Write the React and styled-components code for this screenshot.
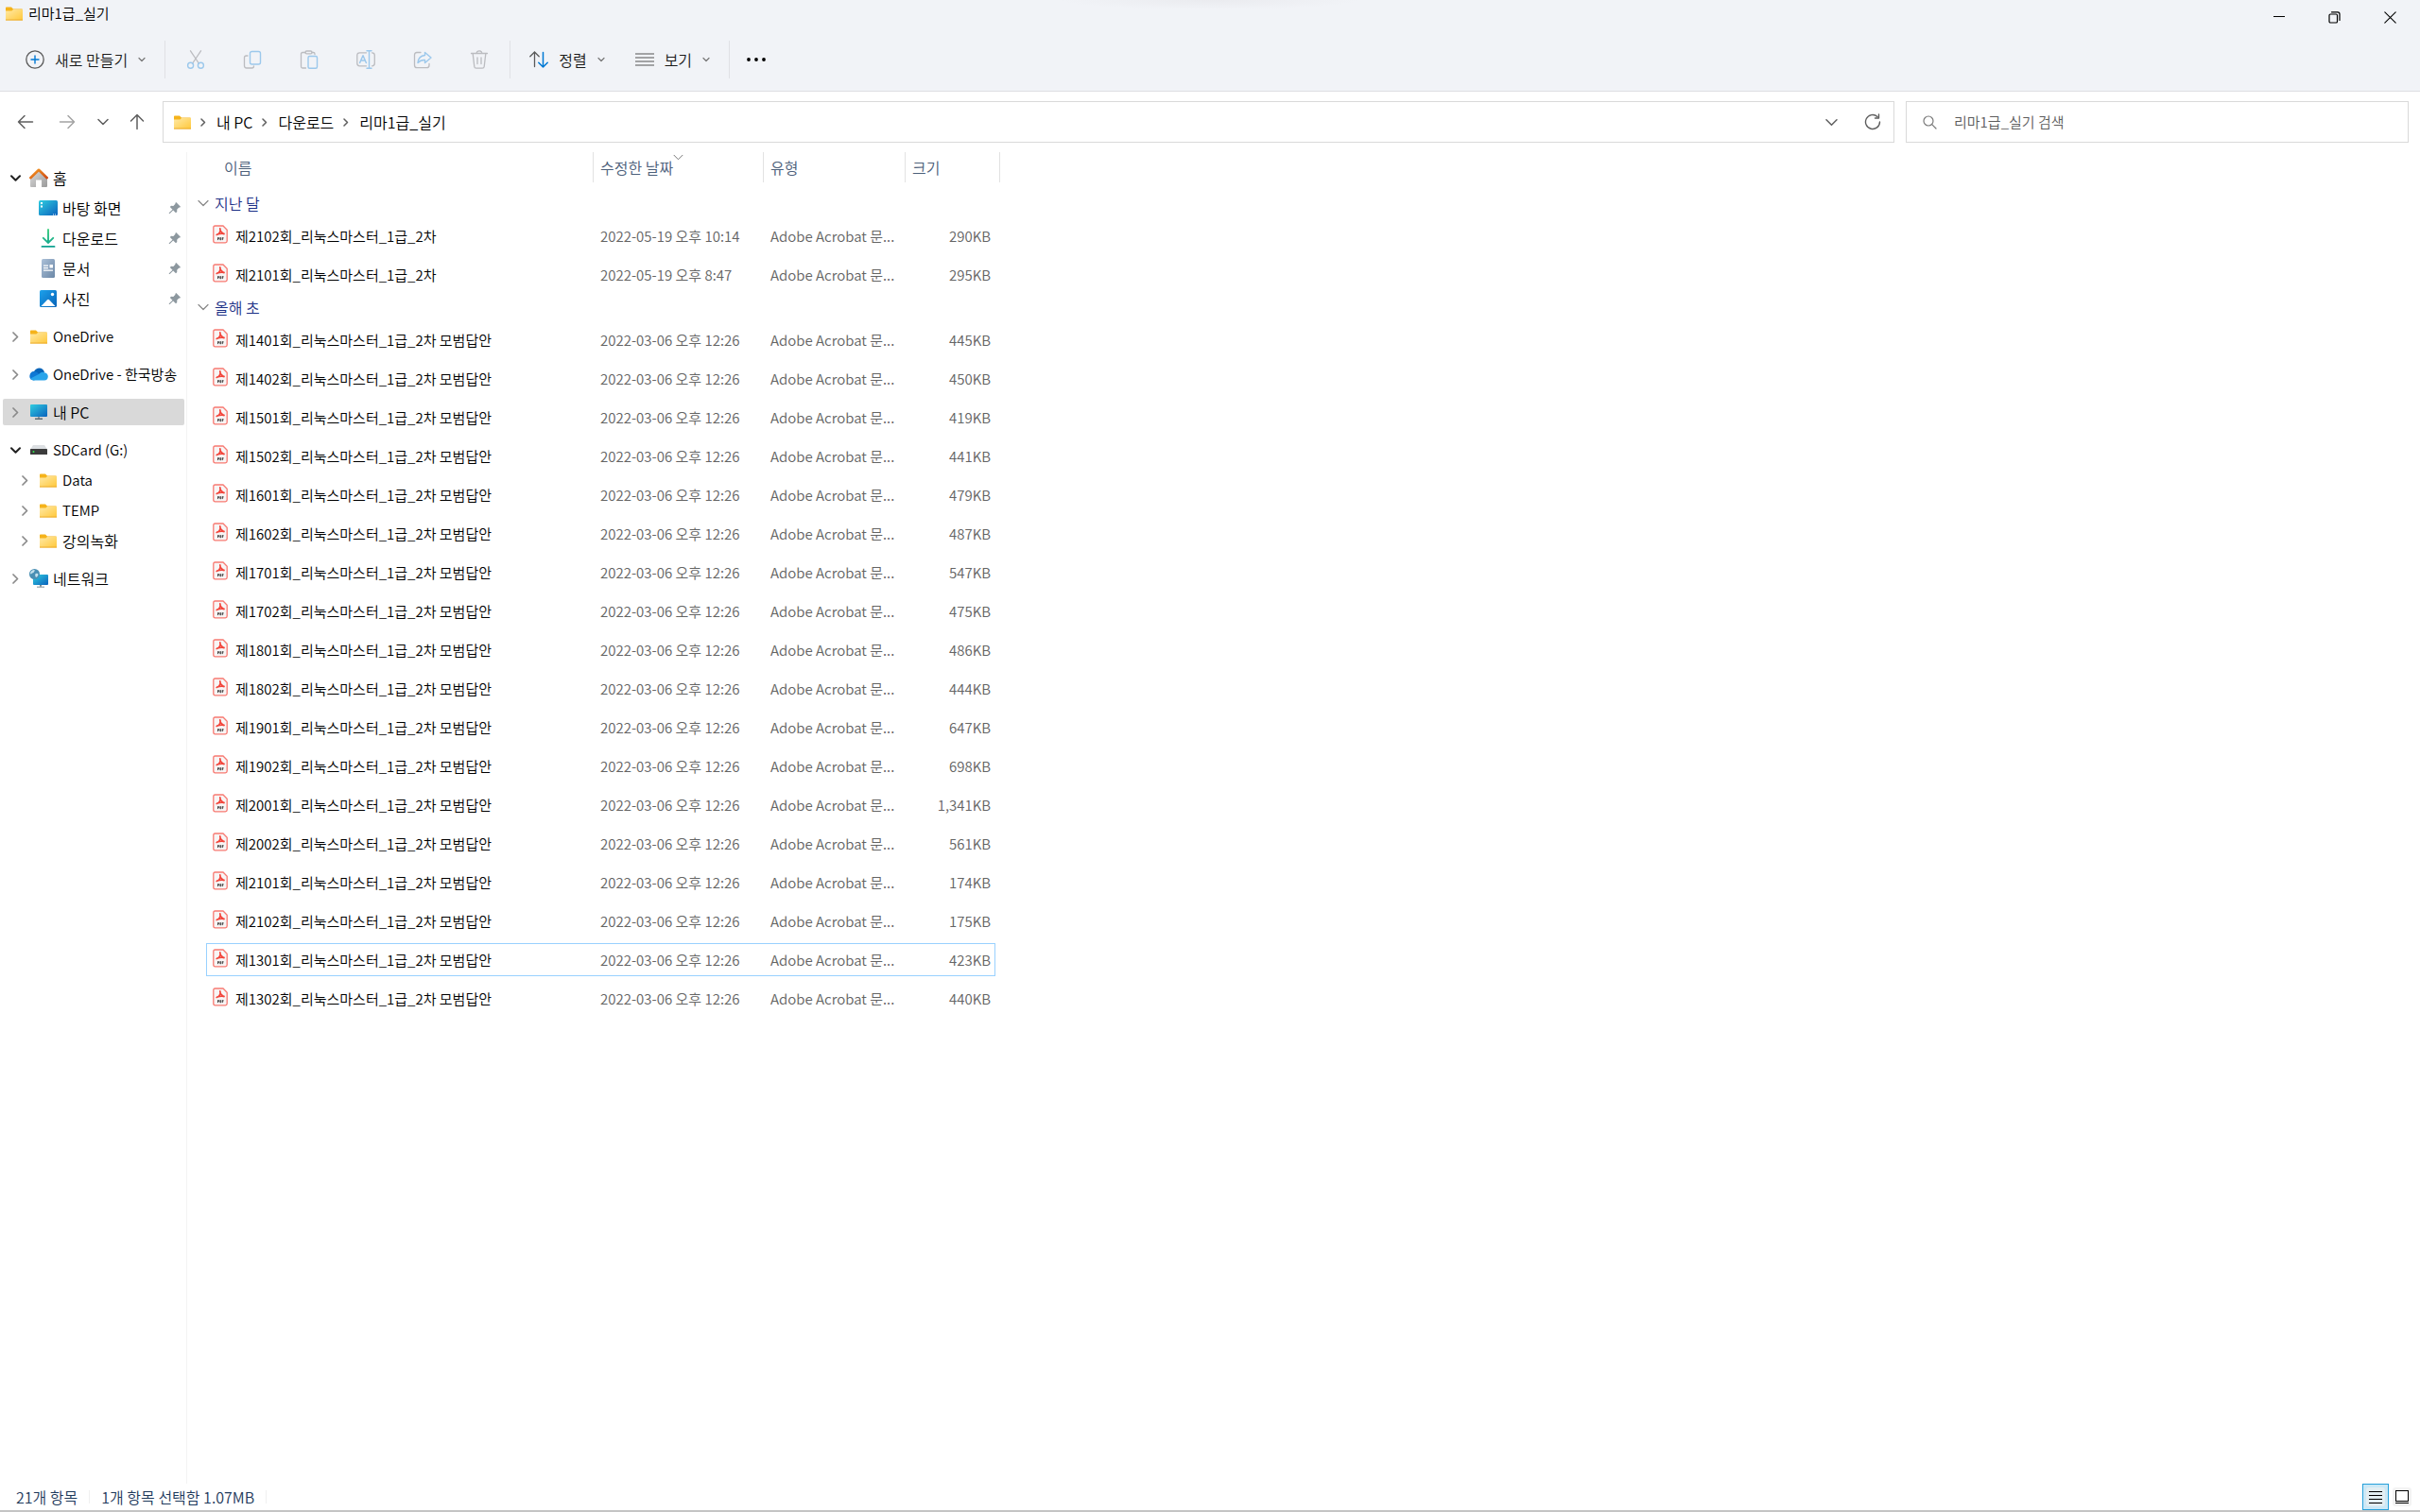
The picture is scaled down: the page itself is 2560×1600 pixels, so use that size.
import React from 'react';
import styled, { createGlobalStyle } from 'styled-components';

const Global = createGlobalStyle`
  * { box-sizing: border-box; }
  body { margin: 0; background: #fff; }
  body, button, input, table {
    font-family: "Noto Sans CJK KR", "Open Sans", sans-serif;
    font-size: 15px;
    font-weight: 350;
    line-height: 20px;
    color: #000;
  }
  button { border: 0; background: none; padding: 0; }
  svg { display: block; flex: none; }
`;

const Window = styled.div`
  min-height: 100vh;
  display: flex;
  flex-direction: column;
  background: #fff;
`;

const Ribbon = styled.header`
  background:
    radial-gradient(ellipse at top, #eaebef, #f1f3f7 70%) top center / 320px 10px no-repeat,
    #f1f3f7;
  border-bottom: 1px solid #dedfe3;
`;

const TitleBar = styled.div`
  display: flex;
  justify-content: space-between;
  height: 36px;
  padding-right: 2px;
`;

const Title = styled.h1`
  display: flex;
  align-items: center;
  gap: 6px;
  height: 28px;
  margin: 0;
  padding-left: 6px;
  font-size: 15px;
  font-weight: 350;
`;

const WindowButtons = styled.div`
  display: flex;
`;

const WindowButton = styled.button`
  width: 59px;
  height: 36px;
  display: grid;
  place-items: center;
`;

const Toolbar = styled.div`
  display: flex;
  align-items: center;
  height: 60px;
  padding: 0 17px 6px;
`;

const MenuButton = styled.button`
  display: flex;
  align-items: center;
  gap: 11px;
  height: 40px;
  padding: 0 10px;
  color: #1b1b1b;
  font-size: 16px;
`;

const ToolButton = styled.button`
  display: grid;
  place-items: center;
  width: 44px;
  height: 40px;
`;

const ToolGroup = styled.div`
  display: flex;
  align-items: center;
  gap: ${(p) => p.$gap || 0}px;
  padding: 0 10px 0 ${(p) => p.$start}px;
  border-right: ${(p) => (p.$last ? '0' : '1px solid #e0e1e5')};
`;

const NavBar = styled.nav`
  display: flex;
  align-items: center;
  padding: 10px 12px;
`;

const NavButtons = styled.div`
  display: flex;
  align-items: center;
`;

const NavButton = styled.button`
  display: grid;
  place-items: center;
  width: ${(p) => p.$w}px;
  height: 32px;
`;

const AddressBar = styled.div`
  display: flex;
  align-items: center;
  justify-content: space-between;
  flex: 1;
  height: 44px;
  padding: 0 1px 0 11px;
  border: 1px solid #d9d9d9;
`;

const Crumbs = styled.ol`
  display: flex;
  align-items: center;
  gap: 10px;
  margin: 0;
  padding: 0;
  list-style: none;
`;

const Crumb = styled.li`
  display: flex;
  align-items: center;
  gap: 11px;
`;

const CrumbLink = styled.a`
  color: #000;
  font-size: 16px;
  text-decoration: none;
`;

const AddressActions = styled.div`
  display: flex;
`;

const SearchBox = styled.label`
  display: flex;
  align-items: center;
  gap: 18px;
  width: 532px;
  height: 44px;
  margin-left: 12px;
  padding: 0 17px;
  border: 1px solid #d9d9d9;
`;

const SearchInput = styled.input`
  flex: 1;
  min-width: 0;
  padding: 0;
  border: 0;
  outline: 0;
  background: none;
  &::placeholder { color: #5c5c5c; opacity: 1; }
`;

const Body = styled.div`
  flex: 1;
  display: flex;
`;

const Sidebar = styled.aside`
  width: 198px;
  padding: 13px 2px 0 3px;
  border-right: 1px solid #f3f3f3;
  display: flex;
  flex-direction: column;
  gap: 12px;
`;

const TreeGroup = styled.ul`
  display: flex;
  flex-direction: column;
  gap: 4px;
  margin: 0;
  padding: 0;
  list-style: none;
`;

const TreeItem = styled.li`
  display: flex;
  align-items: center;
  height: 28px;
  padding-right: 3px;
  padding-left: ${(p) => (p.$level ? 15 : 5)}px;
  border-radius: 2px;
  background: ${(p) => (p.$selected ? '#d9d9d9' : 'transparent')};
`;

const Toggle = styled.button`
  display: grid;
  place-items: center;
  width: 16px;
  height: 20px;
  margin-right: 6px;
`;

const TreeIcon = styled.span`
  display: grid;
  place-items: center;
  width: 22px;
  margin-right: 4px;
`;

const TreeLink = styled.a`
  flex: 1;
  white-space: nowrap;
  color: #000;
  text-decoration: none;
  font-size: ${(p) => (p.$latin ? 15 : 16)}px;
`;

const Content = styled.main`
  flex: 1;
  padding-left: 20px;
`;

const FileTable = styled.table`
  table-layout: fixed;
  width: 835px;
  margin-top: -6px;
  border-collapse: separate;
  border-spacing: 0 6px;
`;

const Th = styled.th`
  height: 37px;
  padding: 0;
  vertical-align: top;
  text-align: left;
  font-weight: 350;
`;

const HeadLabel = styled.div`
  position: relative;
  height: 32px;
  padding-left: ${(p) => (p.$first ? 19 : 7)}px;
  margin-right: ${(p) => (p.$last ? -5 : 0)}px;
  border-right: 1px solid #e2e2e2;
  line-height: 32px;
  font-size: 16px;
  color: #4c607a;
`;

const SortMark = styled.span`
  position: absolute;
  top: 0;
  left: 84px;
`;

const GroupCell = styled.th`
  height: 22px;
  padding: 0;
  text-align: left;
  font-weight: 350;
`;

const GroupButton = styled.button`
  display: flex;
  align-items: center;
  gap: 6px;
  height: 22px;
  margin-left: -9px;
  color: #1e3287;
  font-size: 16px;
  line-height: 22px;
`;

const FileRow = styled.tr`
  outline: ${(p) => (p.$focused ? '1px solid #99d1ff' : '0')};
  outline-offset: -1px;
`;

const Td = styled.td`
  height: 35px;
  padding: 0 ${(p) => (p.$right ? 5 : 7)}px 0 7px;
  white-space: nowrap;
  color: #646464;
  text-align: ${(p) => (p.$right ? 'right' : 'left')};
`;

const FileName = styled.div`
  display: flex;
  align-items: center;
  gap: 8px;
  color: #000;
`;

const StatusBar = styled.footer`
  display: flex;
  justify-content: space-between;
  align-items: center;
  height: 30px;
  padding: 0 9px 0 5px;
  border-bottom: 2px solid #c4c4c4;
  color: #1e395b;
  font-size: 16px;
`;

const StatusTexts = styled.div`
  display: flex;
`;

const StatusText = styled.span`
  padding: 0 12px;
  line-height: 14px;
  border-right: 1px solid #f0f0f0;
`;

const ViewButtons = styled.div`
  display: flex;
  align-items: center;
  gap: 4px;
`;

const ViewButton = styled.button`
  display: grid;
  place-items: center;
  width: ${(p) => (p.$on ? 28 : 20)}px;
  height: 28px;
  background: ${(p) => (p.$on ? '#cbe8f6' : 'none')};
  border: ${(p) => (p.$on ? '1px solid #26a0da' : '0')};
`;

const stroke = (d, o = {}) => (
  <path d={d} fill="none" stroke={o.c || '#5f5f5f'} strokeWidth={o.w || 1.3} strokeLinecap="round" strokeLinejoin="round" />
);

const Svg = ({ w = 20, h = 20, children }) => (
  <svg width={w} height={h} viewBox={`0 0 ${w} ${h}`} aria-hidden="true">{children}</svg>
);

const Folder = () => (
  <Svg w={18} h={15}>
    <defs>
      <linearGradient id="fold" x1="0" y1="0" x2="1" y2="1">
        <stop offset="0" stopColor="#ffe9a6" />
        <stop offset="1" stopColor="#ffc83a" />
      </linearGradient>
    </defs>
    <path d="M0 1.2Q0 .5.8.5H6l2 2h9q1 0 1 1V6H0z" fill="#f5b31b" />
    <path d="M0 4.6h6.4L8 3h10v11.5H0z" fill="url(#fold)" />
    <path d="M0 13.6h18v.9H0z" fill="#e9a72a" />
  </Svg>
);

const Down = ({ c = '#777', s = 6, w = 1.2 }) => (
  <Svg w={s + 2} h={s + 2}>{stroke(`M1 ${s / 4 + 1}L${s / 2 + 1} ${s * 0.75 + 1}L${s + 1} ${s / 4 + 1}`, { c, w })}</Svg>
);

const Right = ({ c = '#5f5f5f', h = 8, w = 1.5 }) => (
  <Svg w={Math.ceil(h / 2) + 2} h={h + 2}>{stroke(`M1 1L${h / 2 + 1} ${h / 2 + 1}L1 ${h + 1}`, { c, w })}</Svg>
);

const G = '#bbbcc0';
const B = '#9cc8ec';

const toolIcons = [
  ['잘라내기', <>
    {stroke('M4.500 0.800L13.300 14M15.500 0.800L6.700 14', { c: G })}
    <circle cx="4.600" cy="16.300" r="3" fill="none" stroke={B} strokeWidth="1.400" />
    <circle cx="15.400" cy="16.300" r="3" fill="none" stroke={B} strokeWidth="1.400" />
  </>],
  ['복사', <>
    {stroke('M5 6H3.500Q1.500 6 1.500 8V16.500Q1.500 19 4 19H9.500Q11.500 19 11.500 17', { c: G })}
    <rect x="7.500" y="1.500" width="11" height="13.500" rx="2" fill="none" stroke={B} strokeWidth="1.400" />
  </>],
  ['붙여넣기', <>
    {stroke('M6 2.500H3Q1.500 2.500 1.500 4V17.500Q1.500 19 3 19H6.500M13 2.500H14.500Q16 2.500 16 4V4.500', { c: G })}
    <rect x="6" y="1" width="7" height="2.800" rx="1.400" fill="none" stroke={G} strokeWidth="1.300" />
    <rect x="9" y="6.500" width="9.500" height="12.700" rx="1.500" fill="none" stroke={B} strokeWidth="1.400" />
  </>],
  ['이름 바꾸기', <>
    {stroke('M10.500 2.800H3.500Q.8 2.800.8 5.500V14Q.8 16.800 3.500 16.800H10.500M16.500 2.800Q19.300 2.800 19.300 5.500V14Q19.300 16.800 16.500 16.800', { c: G })}
    {stroke('M3.600 13.500L7 5.700L10.400 13.500M4.700 11H9.300', { c: B, w: 1.5 })}
    {stroke('M13.500 .8V19.200M11 .8H16M11 19.200H16', { c: B, w: 1.4 })}
  </>],
  ['공유', <>
    {stroke('M8 2.500H4Q1.500 2.500 1.500 5V16Q1.500 18.700 4 18.700H14.500Q17 18.700 17 16V14.500', { c: G })}
    {stroke('M12.500 2.500L19 8L12.500 13.500V10.500Q8 10.200 5 13.500Q5.500 6.200 12.500 5.500Z', { c: B, w: 1.4 })}
  </>],
  ['삭제', <>
    {stroke('M1.500 3.500H18.500M7 3.300Q7.500 .8 10 .8T13 3.300M3.200 3.800L4.800 17.500Q5 19.200 6.800 19.200H13.200Q15 19.200 15.200 17.500L16.800 3.800M8 8V14.500M12 8V14.500', { c: G })}
  </>],
];

const Pin = () => (
  <Svg w={14} h={14}>
    <path d="M8.300 1L13 5.700L12 6.700L11.300 6.500L9.200 8.700L9.300 11L8 12.200L5.200 9.400L1.600 13L.8 13L.8 12.300L4.500 8.700L1.800 6L3 4.700L5.300 4.900L7.500 2.700L7.300 2Z" fill="#8d989f" />
  </Svg>
);

const Home = () => (
  <Svg w={20} h={20}>
    <defs>
      <linearGradient id="hw" x1="0" y1="0" x2="1" y2="1"><stop offset="0" stopColor="#dedede" /><stop offset="1" stopColor="#9a9a9a" /></linearGradient>
      <linearGradient id="hr" x1="0" y1="0" x2="1" y2="1"><stop offset="0" stopColor="#f59a23" /><stop offset="1" stopColor="#cf4a14" /></linearGradient>
    </defs>
    <path d="M1 10L10 1.500L19 10V19Q19 20 18 20H13V12.500H7V20H2Q1 20 1 19Z" fill="url(#hw)" />
    <path d="M1.300 10.200L10 1.800L18.700 10.200" fill="none" stroke="url(#hr)" strokeWidth="2.600" strokeLinecap="round" strokeLinejoin="round" />
  </Svg>
);

const Blues = () => (
  <defs><linearGradient id="blu" x1="0" y1="0" x2="1" y2="1"><stop offset="0" stopColor="#30cde0" /><stop offset="1" stopColor="#0a62bd" /></linearGradient></defs>
);

const Desktop = () => (
  <Svg w={20} h={16}><Blues />
    <rect width="20" height="16" rx="1.500" fill="url(#blu)" />
    <path d="M2 2h2v2H2zM2 5.500h2v2H2zM15 14.500h1v1h-1zM17 14.500h1v1h-1z" fill="#fff" />
  </Svg>
);

const Download = () => (
  <Svg w={20} h={20}>
    <defs><linearGradient id="dn" x1="0" y1="0" x2="0" y2="20" gradientUnits="userSpaceOnUse"><stop offset="0" stopColor="#3bd07e" /><stop offset="1" stopColor="#0d9f92" /></linearGradient></defs>
    <path d="M10 1V14.500M4.800 9.800L10 15L15.200 9.800M3.500 18.900H16.500" fill="none" stroke="url(#dn)" strokeWidth="1.900" strokeLinecap="round" />
  </Svg>
);

const Document = () => (
  <Svg w={14} h={20}>
    <defs><linearGradient id="dc" x1="0" y1="0" x2="1" y2="1"><stop offset="0" stopColor="#abc0d8" /><stop offset="1" stopColor="#6b87a6" /></linearGradient></defs>
    <rect width="14" height="20" rx="1.500" fill="url(#dc)" />
    <path d="M2 6.500h5v1.300H2zM2 9h5v1.300H2zM2 11.500h10v1.300H2zM8.500 6h3.500v3.500H8.500z" fill="#fff" />
  </Svg>
);

const Picture = () => (
  <Svg w={18} h={18}>
    <defs><linearGradient id="pc" x1="0" y1="0" x2="1" y2="1"><stop offset="0" stopColor="#1da2ec" /><stop offset="1" stopColor="#0863b8" /></linearGradient></defs>
    <rect width="18" height="18" rx="1.500" fill="url(#pc)" />
    <path d="M1.500 17L8 10.200Q9 9.200 10 10.200L16.500 17Z" fill="#fff" />
    <circle cx="13.500" cy="4.500" r="1.700" fill="#fff" />
  </Svg>
);

const Cloud = () => (
  <Svg w={20} h={14}>
    <path d="M5 4Q7 .5 10.500 .5Q14.800 .5 16 5L10 9L1 7Q2 4.200 5 4Z" fill="#0764b8" />
    <path d="M4.500 13.500Q.3 13 .3 9Q.8 4.500 5 4.300Q8 4 10 6.500L14 11Z" fill="#0f78d4" />
    <path d="M10 7Q13 4 16 5.200Q19.800 6 19.800 9.500Q19.500 13.500 16 13.500H4.500Q1.500 13 1.200 11.500Z" fill="#29a4ea" />
  </Svg>
);

const Monitor = () => (
  <Svg w={18} h={16}><Blues />
    <rect width="18" height="13" rx="1" fill="url(#blu)" />
    <path d="M8 13h2v2H8z" fill="#8b979e" /><path d="M5 14.500h8v1.500H5z" fill="#5e6b73" />
  </Svg>
);

const Drive = () => (
  <Svg w={18} h={10}>
    <path d="M3 0H15L18 4.500H0Z" fill="#dcdfe2" />
    <rect y="4" width="18" height="6" rx=".6" fill="#3b3b3b" />
    <circle cx="3.500" cy="7" r="1" fill="#2fe04c" />
  </Svg>
);

const Network = () => (
  <Svg w={20} h={20}><Blues />
    <rect x="4" y="6" width="16" height="11" rx="1" fill="url(#blu)" />
    <path d="M11 17h2v2h-2z" fill="#7b8990" /><path d="M8 18.500h8v1.500H8z" fill="#a9b4ba" />
    <circle cx="5.500" cy="5.500" r="5.500" fill="#4a8fb4" />
    <path d="M2 2.500Q4 0 6 1.500Q5 4 3 4.500Q1.500 6 1 5Q1 3.500 2 2.500ZM6.500 5Q9 4 9.500 6Q9 8.500 7 9Q5.500 7 6.500 5Z" fill="#c5e0ec" />
  </Svg>
);

const Pdf = () => (
  <Svg w={16} h={23}>
    <path d="M2.500 1H11L15.200 5.200V17Q15.200 18.800 13.400 18.800H2.500Q.8 18.800.8 17V2.800Q.8 1 2.500 1Z" fill="#f8f5f5" stroke="#f77a72" strokeWidth="1.300" />
    <path d="M7.800 3.800Q8.600 6.200 7.300 8.200Q6.300 9.800 4.200 10.500M7.800 4.300Q7.800 7.300 12 9.700M4.800 10Q8 8.600 12 9.300" fill="none" stroke="#f2463c" strokeWidth="1.700" strokeLinecap="round" />
    <path d="M5.500 13.300v2.800M5.500 13.600h1v1.100h-1M7.900 13.300v2.800M8.100 13.600h.6v2.200h-.6M10.300 13.300v2.800M10.300 13.600h1.200M10.300 14.700h1" fill="none" stroke="#3c3c3c" strokeWidth=".9" />
  </Svg>
);

const tree = [
  [
    { t: '홈', I: Home, open: true },
    { t: '바탕 화면', I: Desktop, level: 1, pin: true },
    { t: '다운로드', I: Download, level: 1, pin: true },
    { t: '문서', I: Document, level: 1, pin: true },
    { t: '사진', I: Picture, level: 1, pin: true },
  ],
  [{ t: 'OneDrive', I: Folder, latin: true }],
  [{ t: 'OneDrive - 한국방송', I: Cloud, latin: true }],
  [{ t: '내 PC', I: Monitor, selected: true }],
  [
    { t: 'SDCard (G:)', I: Drive, open: true, latin: true },
    { t: 'Data', I: Folder, level: 1, latin: true },
    { t: 'TEMP', I: Folder, level: 1, latin: true },
    { t: '강의녹화', I: Folder, level: 1 },
  ],
  [{ t: '네트워크', I: Network }],
];

const answers = [
  ['1401', '445'], ['1402', '450'], ['1501', '419'], ['1502', '441'], ['1601', '479'], ['1602', '487'],
  ['1701', '547'], ['1702', '475'], ['1801', '486'], ['1802', '444'], ['1901', '647'], ['1902', '698'],
  ['2001', '1,341'], ['2002', '561'], ['2101', '174'], ['2102', '175'], ['1301', '423'], ['1302', '440'],
];

const groups = [
  {
    label: '지난 달',
    files: [
      { name: '제2102회_리눅스마스터_1급_2차', date: '2022-05-19 오후 10:14', size: '290KB' },
      { name: '제2101회_리눅스마스터_1급_2차', date: '2022-05-19 오후 8:47', size: '295KB' },
    ],
  },
  {
    label: '올해 초',
    files: answers.map(([n, s]) => ({
      name: `제${n}회_리눅스마스터_1급_2차 모범답안`,
      date: '2022-03-06 오후 12:26',
      size: `${s}KB`,
      focused: n === '1301',
    })),
  },
];

const crumbs = ['내 PC', '다운로드', '리마1급_실기'];

export default function App() {
  return (
    <Window>
      <Global />
      <Ribbon>
        <TitleBar>
          <Title><Folder />리마1급_실기</Title>
          <WindowButtons>
            <WindowButton aria-label="최소화"><Svg w={12} h={12}><path d="M0 5h12v1H0z" /></Svg></WindowButton>
            <WindowButton aria-label="이전 크기로 복원">
              <Svg w={13} h={13}>
                <rect x="1" y="3" width="8.500" height="9" rx="1.300" fill="none" stroke="#000" strokeWidth="1.200" />
                {stroke('M3.500 .8H10Q12 .8 12 3V9.500', { c: '#000', w: 1.2 })}
              </Svg>
            </WindowButton>
            <WindowButton aria-label="닫기"><Svg w={13} h={13}>{stroke('M.8.8L12.200 12.200M12.200.8L.8 12.200', { c: '#000', w: 1.1 })}</Svg></WindowButton>
          </WindowButtons>
        </TitleBar>
        <Toolbar>
          <ToolGroup $start={0}>
            <MenuButton>
              <Svg>
                <circle cx="10" cy="10" r="9.200" fill="none" stroke="#5a5a5a" strokeWidth="1.300" />
                {stroke('M10 6V14M6 10H14', { c: '#0078d4', w: 1.4 })}
              </Svg>
              새로 만들기
              <Down />
            </MenuButton>
          </ToolGroup>
          <ToolGroup $start={10} $gap={16}>
            {toolIcons.map(([label, art]) => (
              <ToolButton key={label} aria-label={label} disabled><Svg>{art}</Svg></ToolButton>
            ))}
          </ToolGroup>
          <ToolGroup $start={10} $gap={12}>
            <MenuButton>
              <Svg>
                {stroke('M5.500 17.500V2M.8 6.800L5.500 2L10.200 6.800', { c: '#5a5a5a' })}
                {stroke('M14.500 2.500V18M9.800 13.200L14.500 18L19.200 13.200', { c: '#0078d4', w: 1.5 })}
              </Svg>
              정렬
              <Down />
            </MenuButton>
            <MenuButton>
              <Svg><path d="M0 3.500h20v1H0zM0 7.500h20v1H0zM0 11.500h20v1H0zM0 15.500h20v1H0z" fill="#555" /></Svg>
              보기
              <Down />
            </MenuButton>
          </ToolGroup>
          <ToolGroup $start={6} $last>
            <ToolButton aria-label="자세히 보기">
              <Svg><circle cx="2" cy="10" r="1.900" /><circle cx="10" cy="10" r="1.900" /><circle cx="18" cy="10" r="1.900" /></Svg>
            </ToolButton>
          </ToolGroup>
        </Toolbar>
      </Ribbon>

      <NavBar>
        <NavButtons>
          <NavButton $w={30} aria-label="뒤로"><Svg w={18} h={16}>{stroke('M1.500 8H16.500M8 1.500L1.500 8L8 14.500', { w: 1.5 })}</Svg></NavButton>
          <NavButton $w={58} aria-label="앞으로"><Svg w={18} h={16}>{stroke('M1.500 8H16.500M10 1.500L16.500 8L10 14.500', { c: '#a3a3a3', w: 1.5 })}</Svg></NavButton>
          <NavButton $w={18} aria-label="최근 위치"><Down s={10} w={1.5} c="#5f5f5f" /></NavButton>
          <NavButton $w={54} aria-label="위로"><Svg w={16} h={18}>{stroke('M8 16.500V1.500M1.500 8L8 1.500L14.500 8', { w: 1.5 })}</Svg></NavButton>
        </NavButtons>
        <AddressBar>
          <Crumbs>
            <Crumb><Folder /></Crumb>
            {crumbs.map((c) => (
              <Crumb key={c}><Right h={7} /><CrumbLink href="#">{c}</CrumbLink></Crumb>
            ))}
          </Crumbs>
          <AddressActions>
            <NavButton $w={43} aria-label="이전 위치"><Down s={11} w={1.5} c="#5f5f5f" /></NavButton>
            <NavButton $w={43} aria-label="새로 고침">
              <Svg w={18} h={18}>{stroke('M16.500 9A7.500 7.500 0 1 1 14 3.400M15.500 1V5H11.500', { w: 1.4 })}</Svg>
            </NavButton>
          </AddressActions>
        </AddressBar>
        <SearchBox>
          <Svg w={15} h={15}>
            <circle cx="6" cy="6" r="5" fill="none" stroke="#7a7a7a" strokeWidth="1.200" />
            {stroke('M9.700 9.700L14 14', { c: '#7a7a7a', w: 1.2 })}
          </Svg>
          <SearchInput type="text" aria-label="검색" placeholder="리마1급_실기 검색" />
        </SearchBox>
      </NavBar>

      <Body>
        <Sidebar>
          {tree.map((g) => (
            <TreeGroup key={g[0].t}>
              {g.map(({ t, I, level, open, pin, selected, latin }) => (
                <TreeItem key={t} $level={level} $selected={selected}>
                  <Toggle as={pin ? 'span' : 'button'} aria-label={pin ? undefined : t}>
                    {!pin && (open ? <Down s={9} w={2} c="#222" /> : <Right h={9} w={1.7} c="#8a8a8a" />)}
                  </Toggle>
                  <TreeIcon><I /></TreeIcon>
                  <TreeLink href="#" $latin={latin}>{t}</TreeLink>
                  {pin && <Pin />}
                </TreeItem>
              ))}
            </TreeGroup>
          ))}
        </Sidebar>
        <Content>
          <FileTable>
            <colgroup>
              <col style={{ width: 410 }} />
              <col style={{ width: 180 }} />
              <col style={{ width: 150 }} />
              <col />
            </colgroup>
            <thead>
              <tr>
                <Th><HeadLabel $first>이름</HeadLabel></Th>
                <Th><HeadLabel>수정한 날짜<SortMark><Down s={9} w={1} /></SortMark></HeadLabel></Th>
                <Th><HeadLabel>유형</HeadLabel></Th>
                <Th><HeadLabel $last>크기</HeadLabel></Th>
              </tr>
            </thead>
            {groups.map((g) => (
              <tbody key={g.label}>
                <tr>
                  <GroupCell colSpan={4}>
                    <GroupButton><Down s={10} w={1.2} c="#888" />{g.label}</GroupButton>
                  </GroupCell>
                </tr>
                {g.files.map((f) => (
                  <FileRow key={f.name} $focused={f.focused}>
                    <Td><FileName><Pdf />{f.name}</FileName></Td>
                    <Td>{f.date}</Td>
                    <Td>Adobe Acrobat 문...</Td>
                    <Td $right>{f.size}</Td>
                  </FileRow>
                ))}
              </tbody>
            ))}
          </FileTable>
        </Content>
      </Body>

      <StatusBar>
        <StatusTexts>
          <StatusText>21개 항목</StatusText>
          <StatusText>1개 항목 선택함 1.07MB</StatusText>
        </StatusTexts>
        <ViewButtons>
          <ViewButton $on aria-label="자세히">
            <Svg><rect width="20" height="20" rx="3" fill="#e3eef2" /><path d="M3 4h14v1H3zM3 8h14v1H3zM3 12h14v1H3zM3 16h14v1H3z" /></Svg>
          </ViewButton>
          <ViewButton aria-label="큰 아이콘">
            <Svg><rect width="20" height="20" rx="3" fill="#f3f3f3" /><rect x="3.500" y="3.500" width="13" height="11" fill="#fff" stroke="#000" /><path d="M3 16h14v1H3z" /></Svg>
          </ViewButton>
        </ViewButtons>
      </StatusBar>
    </Window>
  );
}
